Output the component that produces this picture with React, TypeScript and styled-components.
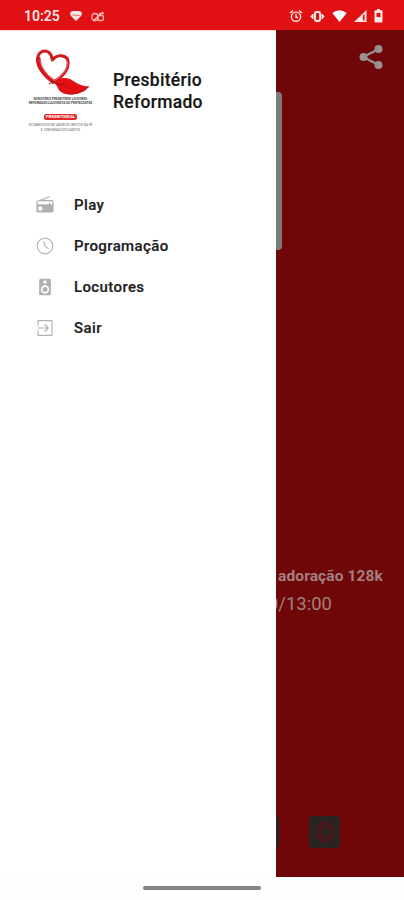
import React from "react";
import styled, { createGlobalStyle } from "styled-components";

const GlobalStyle = createGlobalStyle`
  * { box-sizing: border-box; }
  body { margin: 0; background: #fff; font-family: Roboto, "Liberation Sans", sans-serif; }
`;

const Screen = styled.div`
  width: 404px;
  height: 900px;
  display: flex;
  flex-direction: column;
  overflow: hidden;
  background: #fefefe;
`;

const StatusBar = styled.header`
  height: 30px;
  flex: none;
  display: flex;
  align-items: center;
  padding: 2px 21px 0 24px;
  background: #e11012;
  color: #ffe9e6;
`;

const Clock = styled.span`
  width: 46px;
  font-size: 14px;
  line-height: 16px;
  font-weight: 600;
`;

const StatusGroup = styled.div<{ $gap: number; $end?: boolean }>`
  display: flex;
  align-items: center;
  gap: ${(p) => p.$gap}px;
  margin-left: ${(p) => (p.$end ? "auto" : 0)};
`;

const Glyph = styled.svg<{ $w: number; $h?: number }>`
  display: block;
  flex: none;
  width: ${(p) => p.$w}px;
  height: ${(p) => p.$h ?? p.$w}px;
  fill: currentColor;
`;

const Body = styled.div`
  height: 847px;
  flex: none;
  position: relative;
  background: #6f0607;
`;

const Player = styled.main`
  height: 100%;
  display: flex;
  flex-direction: column;
  align-items: flex-end;
  color: #a38080;
`;

const ShareButton = styled.button`
  margin: 14px 20px 0 0;
  padding: 0;
  border: 0;
  background: none;
  color: #999090;
`;

const Artwork = styled.div`
  width: 160px;
  height: 158px;
  margin: 22px 122px 0 0;
  border-radius: 4px;
  background: #7b7e78;
`;

const Track = styled.div`
  margin: 316px 21px 0 0;
  font-size: 15.5px;
  line-height: 20px;
  font-weight: 700;
  letter-spacing: 0.12px;
  white-space: nowrap;
`;

const Time = styled.div`
  margin: 7px 72px 0 0;
  font-size: 18.4px;
  line-height: 22px;
  letter-spacing: 0.05px;
  white-space: nowrap;
`;

const Links = styled.div`
  display: flex;
  gap: 30px;
  margin: 201px 64px 0 0;
`;

const LinkTile = styled.div`
  width: 31px;
  height: 32px;
  border-radius: 4px;
  background: #292421;
  display: flex;
  align-items: center;
  justify-content: center;
  color: #5a1215;
`;

const Drawer = styled.aside`
  position: absolute;
  left: 0;
  top: 0;
  width: 276px;
  height: 100%;
  background: #fff;
  border-top: 1px solid #fbd9d7;
`;

const DrawerHeader = styled.div`
  display: flex;
  align-items: flex-start;
  height: 153px;
  padding: 17px 0 0 27px;
`;

const Brand = styled.div`
  width: 67px;
  display: flex;
  flex-direction: column;
  align-items: center;
`;

const BrandText = styled.div<{ $color: string; $bold?: boolean }>`
  font-size: 3.1px;
  line-height: 4.2px;
  text-align: center;
  white-space: nowrap;
  font-weight: ${(p) => (p.$bold ? 700 : 400)};
  color: ${(p) => p.$color};
`;

const BrandBadge = styled.div`
  margin: 9px 0 3px;
  width: 33px;
  height: 6px;
  border-radius: 2px;
  background: #df2827;
  color: #fff;
  font-size: 4.4px;
  line-height: 6px;
  font-weight: 700;
  text-align: center;
`;

const Title = styled.h1`
  margin: 21px 0 0 19px;
  font-size: 17.5px;
  line-height: 22px;
  font-weight: 500;
  letter-spacing: 0.3px;
  color: #161616;
  -webkit-text-stroke: 0.2px #161616;
`;

const Menu = styled.nav`
  display: flex;
  flex-direction: column;
`;

const MenuItem = styled.a`
  display: flex;
  align-items: center;
  height: 41px;
  padding-left: 35px;
  gap: 19px;
  color: #b0b0b0;
`;

const MenuLabel = styled.span`
  font-size: 15px;
  line-height: 20px;
  font-weight: 500;
  letter-spacing: 0.38px;
  color: #222;
  -webkit-text-stroke: 0.2px #222;
`;

const GestureBar = styled.footer`
  flex: 1;
  display: flex;
  justify-content: center;
  padding-top: 9px;
`;

const Pill = styled.div`
  width: 118px;
  height: 4px;
  border-radius: 2px;
  background: #858585;
`;

const Icon = ({ size = 20, d }: { size?: number; d: string }) => (
  <Glyph $w={size} viewBox="0 0 24 24"><path d={d} fillRule="evenodd" /></Glyph>
);

const ClockIcon = () => (
  <Glyph $w={20} viewBox="0 0 24 24">
    <g fill="none" stroke="currentColor" strokeWidth="1.3">
      <circle cx="12" cy="12" r="9.4" />
      <path d="M10.500 6.500l1.500 5.500 4.500 3.500" />
    </g>
  </Glyph>
);

const RadioIcon = () => (
  <Glyph $w={20} viewBox="0 0 20 20">
    <path d="M4 5.200 14.500 1l.4.9L7.700 4.900H17a1.600 1.600 0 0 1 1.600 1.600v9.500a1.600 1.600 0 0 1-1.600 1.600H3a1.600 1.600 0 0 1-1.600-1.600v-9.500Q1.400 5.200 4 5.200ZM2.600 6.200V9.300H14V7.500h1.200v1.800h2.200V6.200ZM5.300 11.200a2.300 2.300 0 1 0 0 4.600 2.300 2.300 0 0 0 0-4.600Z" fillRule="evenodd" />
  </Glyph>
);

const items = [
  { label: "Play", icon: <RadioIcon /> },
  { label: "Programação", icon: <ClockIcon /> },
  { label: "Locutores", icon: <Icon d="M17 2H7c-1.100 0-2 .9-2 2v16c0 1.100.9 1.990 2 1.990L17 22c1.100 0 2-.9 2-2V4c0-1.100-.9-2-2-2zm-5 2c1.100 0 2 .9 2 2s-.9 2-2 2a2 2 0 1 1 0-4zm0 16c-2.760 0-5-2.240-5-5s2.240-5 5-5 5 2.240 5 5-2.240 5-5 5zm0-8c-1.660 0-3 1.340-3 3s1.340 3 3 3 3-1.340 3-3-1.340-3-3-3z" /> },
  { label: "Sair", icon: <Icon d="M11 16l1 1 5-5-5-5-1 1 3.200 3.300H3v1.400h11.200zM19.500 2.500H4.500C3.500 2.500 2.800 3.200 2.800 4V9h1.400V4h15.600v16H4.200V15H2.800v5c0 .8.7 1.500 1.700 1.500h15c.9 0 1.700-.7 1.700-1.500V4c0-.8-.8-1.500-1.700-1.500z" /> },
];

const BrandMark = () => (
  <Glyph $w={66} $h={49} viewBox="0 0 66 49">
    <g fill="none" stroke="#d2191e" strokeLinecap="round" strokeLinejoin="round">
      <path d="M27 34C19 29 9.500 21 9.500 12 9.500 4 16 1 21 4.500 24 7 23.500 10 24.500 12 28 7 36 6 39.500 11 42 19 37 28 25 34" strokeWidth="3" />
      <path d="M25 33.500C16 27 11 20 10.500 11" strokeWidth="4.400" />
      <path d="M27 33C19 27 13 20 12 12" stroke="#f3a5a5" strokeWidth=".7" />
      <path d="M39.500 14C40 20 36 27 28 31.500" stroke="#f3a5a5" strokeWidth=".6" />
      <path d="M21 36Q26 32 31 35M25 33 32 37" stroke="#8e1b20" strokeWidth="1" />
    </g>
    <path d="M26 35C30 30 37 28.500 43 31.500 49 35.500 54 38.500 61 38.500 56 46 43 48.500 34 44.500 29 42 30 37 26 35Z" fill="#e40e13" />
    <path d="M28 35.500Q36 36 43 41" fill="none" stroke="#9f1015" strokeWidth=".8" />
    <path d="M34 44.500Q43 48 52 44L61 38.500" fill="none" stroke="#a91519" strokeWidth=".8" />
  </Glyph>
);

const StatusIcons = () => (
  <>
    <Glyph $w={14} viewBox="0 0 14 14">
      <g fill="none" stroke="currentColor" strokeWidth="1.400">
        <circle cx="7" cy="7.700" r="4.600" />
        <path d="M7 5v3l2 1M1 4l3-2.500M13 4l-3-2.500" />
      </g>
    </Glyph>
    <Glyph $w={15} $h={13} viewBox="0 0 15 13">
      <rect x="4.900" y="2" width="5.200" height="9" rx="2" fill="none" stroke="currentColor" strokeWidth="2" />
      <path d="M1 6.500 3 4v5ZM14 6.500 12 4v5Z" stroke="currentColor" />
    </Glyph>
    <Glyph $w={15} $h={12} viewBox="0 0 15 12"><path d="M.3 3Q7.500-2.500 14.700 3L7.500 12Z" fill="#fff" /></Glyph>
    <Glyph $w={13} $h={12} viewBox="0 0 13 12">
      <path d="M12.500 0v12H0Z" />
      <path d="M9.700 4.500v6" stroke="#e11012" strokeWidth="1.700" />
    </Glyph>
    <Glyph $w={9} $h={14} viewBox="0 0 9 14">
      <path d="M3 0h3v1.300h1.500q1 0 1 1V12.500q0 1-1 1h-6q-1 0-1-1V2.300q0-1 1-1H3ZM2.500 4v4h4V4Z" fillRule="evenodd" />
    </Glyph>
  </>
);

export default function App() {
  return (
    <>
      <GlobalStyle />
      <Screen>
        <StatusBar>
          <Clock>10:25</Clock>
          <StatusGroup $gap={9}>
            <Glyph $w={12} $h={10} viewBox="0 0 12 10">
              <path d="M6 10 1 5C-1 2 1 0 3 0H9C11 0 13 2 11 5Z" />
              <path d="M2.500 4H5l1 1.200L7.500 3.800 8.500 4.500h1" fill="none" stroke="#e11012" strokeWidth=".7" />
            </Glyph>
            <Glyph $w={14} $h={11} viewBox="0 0 14 11">
              <g fill="none" stroke="#ffb8b4" strokeWidth="1.300">
                <ellipse cx="4" cy="6" rx="3.200" ry="3.500" />
                <rect x="6.500" y="4.500" width="6" height="5" rx="2" />
                <path d="M2 10 12 1M8 2.500h5" />
              </g>
            </Glyph>
          </StatusGroup>
          <StatusGroup $gap={7} $end><StatusIcons /></StatusGroup>
        </StatusBar>
        <Body>
          <Player>
            <ShareButton aria-label="Compartilhar">
              <Glyph $w={26} viewBox="0 0 26 26">
                <path d="M21 5 5 13l16 8" fill="none" stroke="currentColor" strokeWidth="2.400" />
                <circle cx="20.500" cy="5" r="4" /><circle cx="5.500" cy="13" r="4" /><circle cx="20.500" cy="21" r="4" />
              </Glyph>
            </ShareButton>
            <Artwork />
            <Track>adoração 128k</Track>
            <Time>0/13:00</Time>
            <Links>
              <LinkTile />
              <LinkTile>
                <Glyph $w={22} viewBox="0 0 22 22">
                  <g fill="none" stroke="currentColor" strokeWidth="1.300">
                    <circle cx="11" cy="11" r="9" />
                    <ellipse cx="11" cy="11" rx="4" ry="9" />
                    <path d="M3.500 7h15M3.500 15h15" />
                  </g>
                  <path d="M3 11h16M11 7v8" stroke="#292421" strokeWidth="1.600" />
                </Glyph>
              </LinkTile>
            </Links>
          </Player>
          <Drawer>
            <DrawerHeader>
              <Brand>
                <BrandMark />
                <BrandText $color="#444" $bold>MINISTÉRIO PRESBITÉRIO LOUVORES</BrandText>
                <BrandText $color="#444" $bold>REFORMADO CALVINISTA DO PENTECOSTES</BrandText>
                <BrandBadge>PRESBITERIAL</BrandBadge>
                <BrandText $color="#666">ESTABELECIDO NO AMOR DE CRISTO E NA FÉ</BrandText>
                <BrandText $color="#666">E COMUNHÃO DOS SANTOS</BrandText>
              </Brand>
              <Title>Presbitério<br />Reformado</Title>
            </DrawerHeader>
            <Menu>
              {items.map(({ label, icon }) => (
                <MenuItem key={label}>
                  {icon}
                  <MenuLabel>{label}</MenuLabel>
                </MenuItem>
              ))}
            </Menu>
          </Drawer>
        </Body>
        <GestureBar><Pill /></GestureBar>
      </Screen>
    </>
  );
}
